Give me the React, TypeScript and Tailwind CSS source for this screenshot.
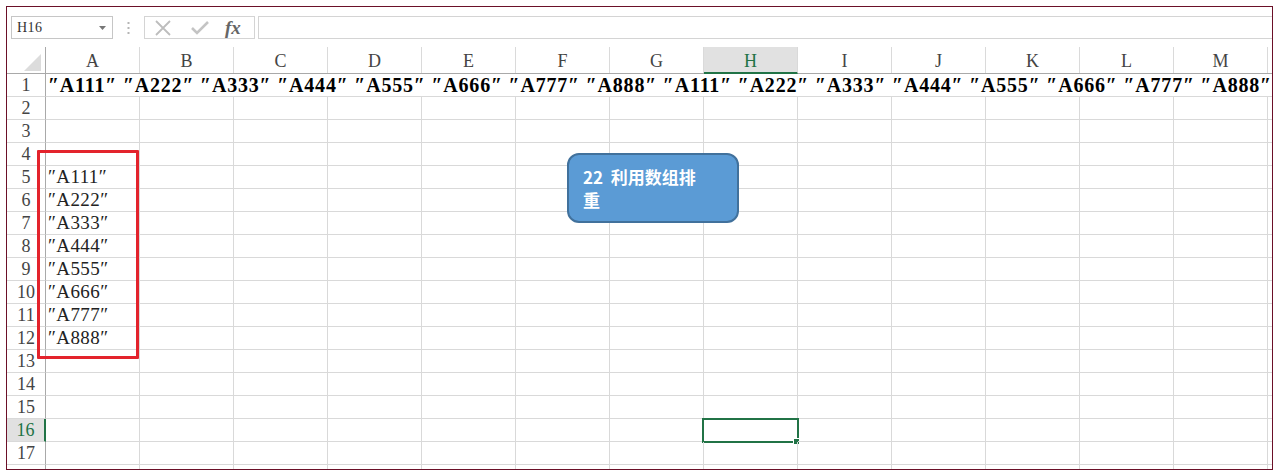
import { Fragment } from 'react'

const COLS = ['A', 'B', 'C', 'D', 'E', 'F', 'G', 'H', 'I', 'J', 'K', 'L', 'M']
const ITEMS = ['A111', 'A222', 'A333', 'A444', 'A555', 'A666', 'A777', 'A888']
const SERIF = "font-['Liberation_Serif','DejaVu_Serif',serif]"

function FormulaBar() {
  return (
    <div className="flex items-stretch h-[24px] mt-[9px] pl-[4px]">
      <div className="w-[102px] border border-[#c6c6c6] flex items-center justify-between pl-[5px] pr-[6px]">
        <span className={`${SERIF} text-[14px] text-[#333] tracking-[0.5px]`}>H16</span>
        <svg width="7" height="4" viewBox="0 0 7 4">
          <polygon points="0,0 7,0 3.5,4" fill="#777" />
        </svg>
      </div>
      <div className="w-[31px] flex items-center justify-center">
        <svg width="3" height="12" viewBox="0 0 3 12">
          <rect x="0.5" y="0" width="2" height="2" fill="#b5b5b5" />
          <rect x="0.5" y="5" width="2" height="2" fill="#b5b5b5" />
          <rect x="0.5" y="10" width="2" height="2" fill="#b5b5b5" />
        </svg>
      </div>
      <div className="w-[111px] border border-[#d4d4d4] flex items-center pl-[9px]">
        <svg width="18" height="16" viewBox="0 0 18 16" className="mr-[19px]">
          <path d="M2 1 L16 15 M16 1 L2 15" stroke="#bdbdbd" strokeWidth="1.8" fill="none" />
        </svg>
        <svg width="18" height="15" viewBox="0 0 18 15" className="mr-[16px]">
          <path d="M1 8 L6 13 L17 2" stroke="#c4c4c4" strokeWidth="2.6" fill="none" />
        </svg>
        <span className={`${SERIF} italic font-bold text-[19px] leading-none text-[#666]`}>fx</span>
      </div>
      <div className="flex-1 ml-[3px] border border-r-0 border-[#d4d4d4]" />
    </div>
  )
}

function HeaderRow() {
  return (
    <div className="flex h-[27px] border-b border-[#a9a9a9]">
      <div className="w-[39px] shrink-0 border-r border-[#a9a9a9] flex items-end justify-end pr-[4px] pb-[2px]">
        <svg width="17" height="17" viewBox="0 0 17 17">
          <polygon points="17,0 17,17 0,17" fill="#dcdcdc" />
        </svg>
      </div>
      {COLS.map((c) => (
        <div
          key={c}
          className={`w-[94px] shrink-0 flex items-center justify-center pt-[3px] ${SERIF} text-[18px] ${
            c === 'H'
              ? 'bg-[#e1e1e1] text-[#217346] border-b-2 border-[#217346] -mb-[1px] border-r border-r-[#d9d9d9]'
              : 'text-[#444] border-r border-[#dadada]'
          }`}
        >
          {c}
        </div>
      ))}
      <div className="flex-1" />
    </div>
  )
}

function RowHead({ n, label }: { n: number; label: boolean }) {
  const sel = n === 16
  return (
    <div
      className={`w-[39px] shrink-0 flex items-center justify-center ${SERIF} text-[18px] border-b border-[#d9d9d9] ${
        sel ? 'bg-[#e1e1e1] text-[#217346] border-r-2 border-r-[#217346]' : 'text-[#444] border-r border-r-[#a9a9a9]'
      }`}
    >
      {label ? n : ''}
    </div>
  )
}

function Row({ n }: { n: number }) {
  if (n === 1) {
    return (
      <div className="flex h-[23px]">
        <RowHead n={1} label />
        <div className="flex-1 border-b border-[#d9d9d9] flex items-center pl-[2px] overflow-hidden">
          <span className={`${SERIF} font-bold text-[20px] tracking-[0.8px] whitespace-pre text-black`}>
            {[...ITEMS, ...ITEMS].map((t) => `″${t}″`).join(' ')}
          </span>
        </div>
      </div>
    )
  }
  const last = n > 17
  const text = n >= 5 && n <= 12 ? `″${ITEMS[n - 5]}″` : ''
  return (
    <div className={`flex ${last ? 'h-[6px]' : 'h-[23px]'}`}>
      <RowHead n={n} label={!last} />
      {COLS.map((c) => (
        <div key={c} className="relative w-[94px] shrink-0 border-r border-b border-[#d9d9d9] flex items-center pl-[2px]">
          {c === 'A' && text && (
            <span className={`${SERIF} text-[19px] tracking-[0.4px] whitespace-pre text-[#222]`}>{text}</span>
          )}
          {c === 'H' && n === 16 && (
            <Fragment>
              <div className="absolute -left-[2px] -top-[1px] w-[97px] h-[25px] border-2 border-[#217346]" />
              <div className="absolute left-[89px] top-[19px] w-[7px] h-[7px] bg-[#217346] border border-white" />
            </Fragment>
          )}
        </div>
      ))}
      <div className="flex-1 border-b border-[#d9d9d9]" />
    </div>
  )
}

export default function App() {
  const rows = Array.from({ length: 18 }, (_, i) => i + 1)
  return (
    <div className="w-[1285px] h-[476px] bg-white pt-[6px] pl-[6px]">
      <div className="w-[1267px] h-[464px] border border-[#6b1028] overflow-hidden flex flex-col">
        <FormulaBar />
        <div className="relative mt-[8px]">
          <HeaderRow />
          {rows.map((n) => (
            <Row key={n} n={n} />
          ))}
          <div className="absolute left-[30px] top-[103px] w-[102px] h-[209px] border-[3px] border-[#e3232c] rounded-[1px]" />
          <div className="absolute left-[560px] top-[106px] w-[172px] h-[70px] rounded-[12px] bg-[#5b9bd5] border-2 border-[#41719c] pl-[14px] pt-[10px]">
            <p className="font-['Noto_Sans_CJK_SC',sans-serif] font-bold text-[17px] leading-[23px] text-white whitespace-pre">
              22&nbsp; 利用数组排
              <br />重
            </p>
          </div>
        </div>
      </div>
    </div>
  )
}
